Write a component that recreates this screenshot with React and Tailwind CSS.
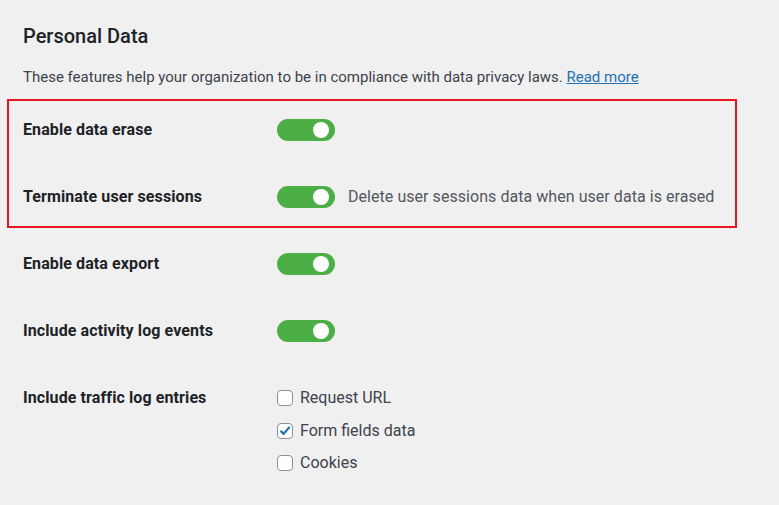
import React, { useState } from 'react';

const font = { fontFamily: 'Roboto, "Liberation Sans", sans-serif' };

function Toggle({ on, onChange }) {
  return (
    <button
      type="button"
      onClick={() => onChange(!on)}
      className={`relative h-[22px] w-[58px] shrink-0 rounded-full ${on ? 'bg-[#4caf45]' : 'bg-[#c3c4c7]'}`}
    >
      <span
        className={`absolute top-[3px] h-[16px] w-[16px] rounded-full bg-white ${on ? 'right-[6px]' : 'left-[6px]'}`}
      />
    </button>
  );
}

function Checkbox({ checked, onChange, label }) {
  return (
    <label className="flex h-[32.5px] items-center gap-[7px] cursor-pointer">
      <span
        onClick={() => onChange(!checked)}
        className="flex h-[16px] w-[16px] items-center justify-center rounded-[4px] border border-[#8c8f94] bg-white"
      >
        {checked && (
          <svg width="16" height="16" viewBox="0 0 20 20">
            <path d="M4.5 10.5l3.6 3.6L15.8 5" fill="none" stroke="#2271b1" strokeWidth="3.2" strokeLinecap="round" strokeLinejoin="round" />
          </svg>
        )}
      </span>
      <span className="text-[16px] text-[#3c434a]">{label}</span>
    </label>
  );
}

function Row({ label, children }) {
  return (
    <div className="flex h-[22px] items-center">
      <div className="w-[254px] shrink-0 text-[16px] font-bold tracking-[0.1px] text-[#1d2327]">{label}</div>
      <div className="flex items-center">{children}</div>
    </div>
  );
}

export default function App() {
  const [erase, setErase] = useState(true);
  const [sessions, setSessions] = useState(true);
  const [exportOn, setExportOn] = useState(true);
  const [activity, setActivity] = useState(true);
  const [traffic, setTraffic] = useState({ url: false, form: true, cookies: false });

  return (
    <div style={font} className="min-h-[505px] w-full bg-[#f0f0f1] pl-[7px] pt-[23px]">
      <h2 className="pl-[16px] text-[20px] font-medium leading-[26px] text-[#1d2327]">Personal Data</h2>
      <p className="mt-[18px] pl-[16px] text-[15px] leading-[20px] text-[#3c434a]">
        These features help your organization to be in compliance with data privacy laws.{' '}
        <a href="#" className="text-[#2271b1] underline">Read more</a>
      </p>

      <div className="mt-[12px] w-[730px] border-2 border-[#e5161d] pb-[18px] pl-[14px] pt-[18px]">
        <Row label="Enable data erase">
          <Toggle on={erase} onChange={setErase} />
        </Row>
        <div className="mt-[45px]">
          <Row label="Terminate user sessions">
            <Toggle on={sessions} onChange={setSessions} />
            <span className="ml-[13px] text-[16px] tracking-[0.05px] text-[#50575e]">Delete user sessions data when user data is erased</span>
          </Row>
        </div>
      </div>

      <div className="pl-[16px]">
        <div className="mt-[25px]">
          <Row label="Enable data export">
            <Toggle on={exportOn} onChange={setExportOn} />
          </Row>
        </div>
        <div className="mt-[45px]">
          <Row label="Include activity log events">
            <Toggle on={activity} onChange={setActivity} />
          </Row>
        </div>
        <div className="mt-[40px] flex">
          <div className="flex h-[32.5px] w-[254px] shrink-0 items-center text-[16px] font-bold tracking-[0.1px] text-[#1d2327]">
            Include traffic log entries
          </div>
          <div className="flex flex-col">
            <Checkbox checked={traffic.url} onChange={v => setTraffic({ ...traffic, url: v })} label="Request URL" />
            <Checkbox checked={traffic.form} onChange={v => setTraffic({ ...traffic, form: v })} label="Form fields data" />
            <Checkbox checked={traffic.cookies} onChange={v => setTraffic({ ...traffic, cookies: v })} label="Cookies" />
          </div>
        </div>
      </div>
    </div>
  );
}
